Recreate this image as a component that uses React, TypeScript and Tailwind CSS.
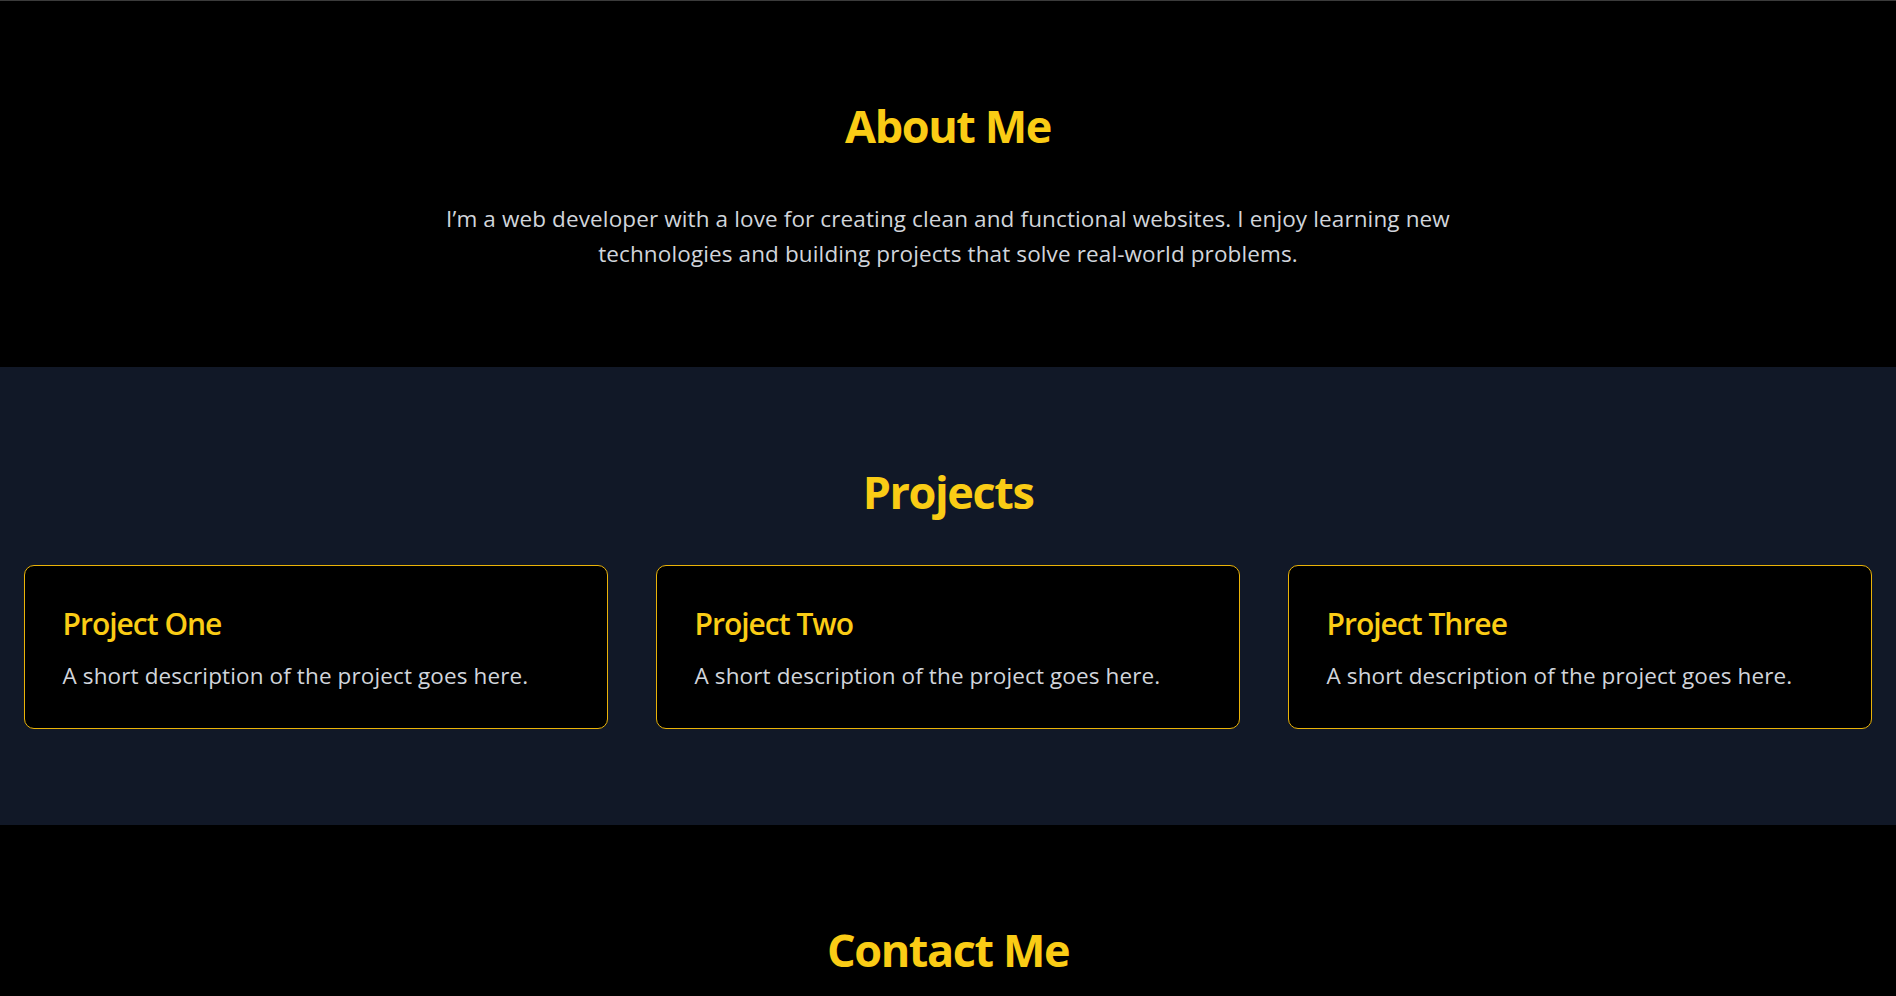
const projects = [
  { title: "Project One", desc: "A short description of the project goes here." },
  { title: "Project Two", desc: "A short description of the project goes here." },
  { title: "Project Three", desc: "A short description of the project goes here." },
];

export default function App() {
  return (
    <div className="min-h-screen bg-black font-['Open_Sans',sans-serif]">
      {/* About */}
      <section className="border-t border-[#3b3b3b] bg-black px-[24px] pt-[100px] pb-[96px] text-center">
        <h2 className="mb-[50px] text-[45px] leading-[50px] font-bold tracking-[-1.4px] text-[#facc15]">About Me</h2>
        <p className="mx-auto max-w-[1120px] text-[22.5px] leading-[35px] tracking-[0.12px] text-[#d1d5db]">
          I’m a web developer with a love for creating clean and functional websites. I enjoy learning new
          technologies and building projects that solve real-world problems.
        </p>
      </section>

      {/* Projects */}
      <section className="bg-[#111827] px-[24px] pt-[100px] pb-[96px]">
        <h2 className="mb-[48px] text-center text-[45px] leading-[50px] font-bold tracking-[-1.4px] text-[#facc15]">
          Projects
        </h2>
        <div className="grid grid-cols-3 gap-[48px]">
          {projects.map((p) => (
            <div key={p.title} className="rounded-[10px] border border-[#eab308] bg-black px-[37.5px] pt-[37.5px] pb-[35px]">
              <h3 className="mb-[14.5px] text-[30px] leading-[40px] font-semibold tracking-[-1px] text-[#facc15]">
                {p.title}
              </h3>
              <p className="text-[22.5px] leading-[35px] tracking-[0.12px] text-[#d1d5db]">{p.desc}</p>
            </div>
          ))}
        </div>
      </section>

      {/* Contact */}
      <section className="bg-black px-[24px] pt-[100px] pb-[100px] text-center">
        <h2 className="text-[45px] leading-[50px] font-bold tracking-[-1.4px] text-[#facc15]">Contact Me</h2>
      </section>
    </div>
  );
}
